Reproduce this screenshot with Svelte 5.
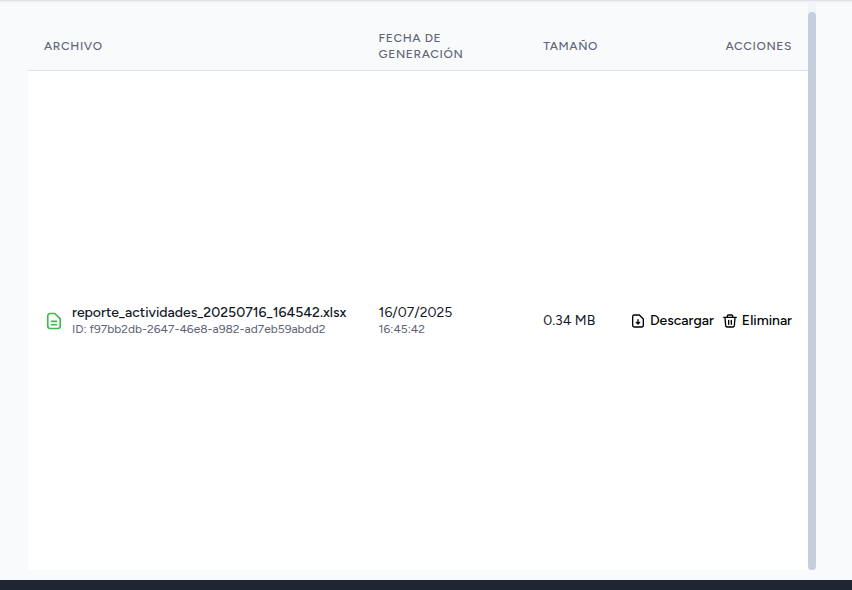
<script>
  const files = [
    {
      name: 'reporte_actividades_20250716_164542.xlsx',
      id: 'f97bb2db-2647-46e8-a982-ad7eb59abdd2',
      date: '16/07/2025',
      time: '16:45:42',
      size: '0.34 MB'
    }
  ];
</script>

<div class="page">
  <div class="topline"></div>
  <main>
    <div class="list">
      <table>
        <colgroup>
          <col class="c-file" />
          <col class="c-date" />
          <col class="c-size" />
          <col class="c-actions" />
        </colgroup>
        <thead>
          <tr>
            <th scope="col">Archivo</th>
            <th scope="col">Fecha de<br />generación</th>
            <th scope="col">Tamaño</th>
            <th scope="col" class="end">Acciones</th>
          </tr>
        </thead>
        <tbody>
          {#each files as file (file.id)}
            <tr>
              <td>
                <div class="file">
                  <svg class="sheet" viewBox="0 0 24 24" width="20" height="20" aria-hidden="true">
                    <path d="M13 3H7.500A3 3 0 0 0 4.500 6v12a3 3 0 0 0 3 3h9a3 3 0 0 0 3-3V9.500z" />
                    <path d="M9 12.500h6M9 16.500h6" />
                  </svg>
                  <div>
                    <div class="name">{file.name}</div>
                    <div class="sub">ID: {file.id}</div>
                  </div>
                </div>
              </td>
              <td>
                <div class="value">{file.date}</div>
                <div class="sub">{file.time}</div>
              </td>
              <td><div class="value">{file.size}</div></td>
              <td>
                <div class="actions">
                  <button type="button">
                    <svg viewBox="0 0 24 24" width="16" height="16" aria-hidden="true">
                      <path d="M14 3H6.500A2.500 2.500 0 0 0 4 5.500v13A2.500 2.500 0 0 0 6.500 21h11a2.500 2.500 0 0 0 2.500-2.500V9z" />
                      <path d="M12 10v6M9.500 14l2.500 2.500 2.500-2.500" />
                    </svg>
                    Descargar
                  </button>
                  <button type="button">
                    <svg viewBox="0 0 24 24" width="16" height="16" aria-hidden="true">
                      <path d="M2.500 6.500h19M8 6V4.500A1.500 1.500 0 0 1 9.500 3h5A1.500 1.500 0 0 1 16 4.500V6M4.500 7l1 12a2.300 2.300 0 0 0 2.300 2h8.400a2.300 2.300 0 0 0 2.300-2L19.500 7M10 11v6M14 11v6" />
                    </svg>
                    Eliminar
                  </button>
                </div>
              </td>
            </tr>
          {/each}
        </tbody>
      </table>
    </div>
    <div class="track"><div class="thumb"></div></div>
  </main>
  <footer></footer>
</div>

<style>
  :global(body) {
    background: #f8fafc;
  }
  .page {
    display: flex;
    flex-direction: column;
    height: 100vh;
    font-family: Figtree, Inter, sans-serif;
    color: #111827;
  }
  .topline {
    height: 1px;
    background: #dfe1e8;
    box-shadow: 0 1px 2px rgba(0, 0, 0, 0.08);
  }
  main {
    flex: 1;
    display: flex;
    min-height: 0;
    padding: 0 36px 10px 28px;
  }
  .list {
    flex: 1;
    min-width: 0;
  }
  table {
    width: 100%;
    height: 100%;
    table-layout: fixed;
    border-collapse: separate;
    border-spacing: 0;
  }
  .c-file {
    width: 42.9%;
  }
  .c-date {
    width: 21.1%;
  }
  .c-size {
    width: 11%;
  }
  .c-actions {
    width: 25%;
  }
  th {
    height: 32px;
    padding: 29px 16px 8px;
    border-bottom: 1px solid #dfe1e8;
    color: #606675;
    font-size: 12px;
    font-weight: 500;
    line-height: 16px;
    letter-spacing: 0.05em;
    text-align: left;
    text-transform: uppercase;
  }
  th.end {
    text-align: right;
  }
  td {
    padding: 0 16px;
    background: #fff;
    vertical-align: middle;
    white-space: nowrap;
  }
  td:last-child {
    padding-left: 0;
  }
  .file {
    display: flex;
    align-items: center;
    gap: 8px;
  }
  svg {
    flex: none;
    fill: none;
    stroke: currentColor;
    stroke-width: 2;
    stroke-linecap: round;
    stroke-linejoin: round;
  }
  .sheet {
    color: #3fb950;
  }
  .name,
  .value {
    font-size: 14px;
    line-height: 16px;
  }
  .name {
    font-weight: 500;
  }
  .sub {
    color: #5b6173;
    font-size: 12px;
    line-height: 16px;
  }
  .actions {
    display: flex;
    justify-content: flex-end;
    gap: 8px;
  }
  button {
    display: flex;
    align-items: center;
    gap: 4px;
    padding: 0;
    border: 0;
    background: none;
    color: #000;
    font: 500 14px/20px Figtree, Inter, sans-serif;
    cursor: pointer;
  }
  .track {
    flex: none;
    width: 8px;
    padding-top: 11px;
    background: #f1f5f9;
    display: flex;
  }
  .thumb {
    flex: 1;
    border-radius: 4px;
    background: #c5cfdc;
  }
  footer {
    flex: none;
    height: 10px;
    background: #1f2533;
  }
</style>
